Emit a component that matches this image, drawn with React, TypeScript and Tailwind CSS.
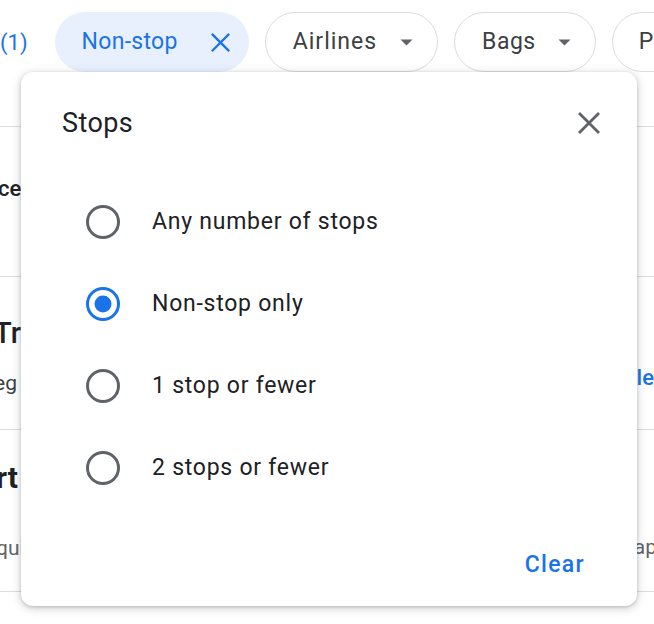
import { useState } from 'react';

const options = ['Any number of stops', 'Non-stop only', '1 stop or fewer', '2 stops or fewer'];

function Caret() {
  return (
    <svg width="13" height="7" viewBox="0 0 13 7" className="shrink-0">
      <path d="M0.5 0.5h12L6.5 6.5z" fill="#5f6368" />
    </svg>
  );
}

function Cross({ size, color, stroke }: { size: number; color: string; stroke: number }) {
  return (
    <svg width={size} height={size} viewBox="0 0 24 24" className="shrink-0">
      <path d="M3 3L21 21M21 3L3 21" stroke={color} strokeWidth={stroke} strokeLinecap="square" />
    </svg>
  );
}

function Radio({ checked }: { checked: boolean }) {
  return (
    <svg width="34" height="34" viewBox="0 0 34 34" className="shrink-0">
      <circle cx="17" cy="17" r="15.5" fill="none" stroke={checked ? '#1a73e8' : '#5f6368'} strokeWidth="3" />
      {checked ? <circle cx="17" cy="17" r="8.5" fill="#1a73e8" /> : null}
    </svg>
  );
}

export default function App() {
  const [selected, setSelected] = useState(1);

  return (
    <div className="relative w-[654px] h-[624px] overflow-hidden bg-white font-['Roboto',sans-serif] text-[#202124]">
      {/* filter chips */}
      <div className="flex items-center gap-4 h-[84px] pt-[12px] pb-[12px] whitespace-nowrap">
        <span className="text-[22px] text-[#1a73e8] mr-[11px]">(1)</span>
        <div className="flex items-center gap-[32px] h-[60px] pl-[27px] pr-[18px] rounded-full bg-[#e8f0fe] text-[#1a73e8] text-[23px] tracking-[0.3px] shrink-0">
          Non-stop
          <Cross size={21} color="#1a73e8" stroke={2.6} />
        </div>
        <div className="flex items-center gap-[23px] h-[60px] pl-[27px] pr-[24px] rounded-full border border-[#dadce0] text-[#3c4043] text-[23px] tracking-[1px] shrink-0">
          Airlines
          <Caret />
        </div>
        <div className="flex items-center gap-[22px] h-[60px] pl-[27px] pr-[24px] rounded-full border border-[#dadce0] text-[#3c4043] text-[23px] tracking-[0.5px] shrink-0">
          Bags
          <Caret />
        </div>
        <div className="flex items-center h-[60px] pl-[26px] pr-[24px] rounded-full border border-[#dadce0] text-[#3c4043] text-[23px] shrink-0">
          Price
        </div>
      </div>

      {/* list behind the popup */}
      <div className="h-[43px] border-b border-[#dadce0]" />
      <div className="h-[150px] flex items-center justify-between border-b border-[#dadce0] whitespace-nowrap">
        <span className="-ml-[2px] mb-[26px] text-[22px] font-medium">ces</span>
      </div>
      <div className="h-[153px] flex items-center justify-between border-b border-[#dadce0] whitespace-nowrap">
        <div className="flex flex-col gap-[20px] -ml-[6px] pt-[5px]">
          <span className="text-[29px] font-medium leading-[34px]">Tra</span>
          <span className="text-[21px] text-[#3c4043] leading-[26px]">eg</span>
        </div>
        <span className="text-[22px] font-medium text-[#1a73e8] mt-[48px]">le</span>
      </div>
      <div className="h-[162px] flex items-center justify-between border-b border-[#dadce0] whitespace-nowrap">
        <div className="flex flex-col gap-[39px] -ml-[4px]">
          <span className="text-[30px] font-bold leading-[36px]">rt</span>
          <span className="text-[21px] text-[#5f6368] leading-[26px]">qui</span>
        </div>
        <span className="text-[21px] text-[#5f6368] mr-[-3px] mt-[74px]">ap</span>
      </div>

      {/* stops popup */}
      <div className="absolute left-[21px] top-[72px] w-[616px] h-[534px] rounded-xl bg-white shadow-[0_2px_10px_rgba(60,64,67,0.28),0_1px_3px_rgba(60,64,67,0.2)] pt-[35px] pb-[21px] flex flex-col">
        <div className="flex items-center justify-between pl-[41px] pr-[36px] h-[32px]">
          <h2 className="text-[27px] leading-[32px] tracking-[0.4px]">Stops</h2>
          <button className="p-0">
            <Cross size={24} color="#5f6368" stroke={2.8} />
          </button>
        </div>

        <div className="flex flex-col mt-[42px]">
          {options.map((label, i) => (
            <label
              key={label}
              onClick={() => setSelected(i)}
              className="flex items-center gap-[32px] h-[82px] pl-[65px] cursor-pointer"
            >
              <Radio checked={selected === i} />
              <span className="text-[23px] tracking-[0.75px]">{label}</span>
            </label>
          ))}
        </div>

        <div className="mt-auto flex justify-end pr-[40px]">
          <button className="h-[40px] px-[12px] text-[23px] font-medium text-[#1a73e8] tracking-[1.3px]">Clear</button>
        </div>
      </div>
    </div>
  );
}
